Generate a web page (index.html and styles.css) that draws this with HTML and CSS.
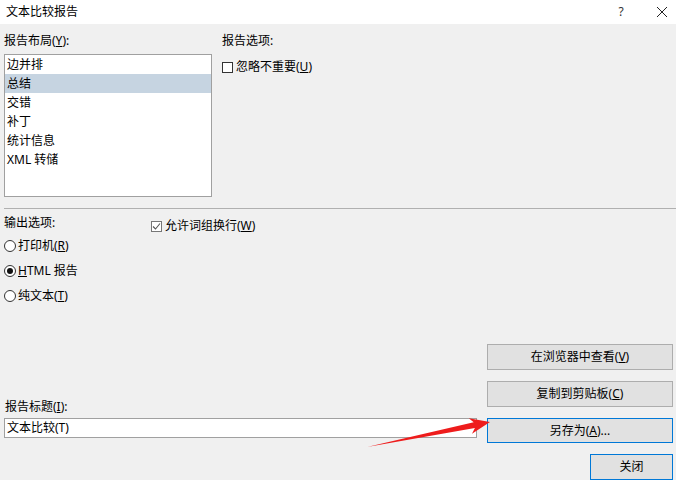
FILE: index.html
```html
<!DOCTYPE html>
<html lang="zh-CN">
<head>
<meta charset="utf-8">
<title>文本比较报告</title>
<link rel="stylesheet" href="styles.css">
</head>
<body>
<div class="dialog">
  <div class="titlebar">
    <span class="title">文本比较报告</span>
    <span class="help">?</span>
    <span class="close-x"><svg width="12" height="12" viewBox="0 0 12 12"><path d="M1 1 L11 11 M11 1 L1 11" stroke="#222" stroke-width="1" fill="none"/></svg></span>
  </div>

  <div class="top">
    <div class="layout-col">
      <div class="label">报告布局(<u>Y</u>):</div>
      <div class="listbox">
        <div class="item">边并排</div>
        <div class="item selected">总结</div>
        <div class="item">交错</div>
        <div class="item">补丁</div>
        <div class="item">统计信息</div>
        <div class="item">XML 转储</div>
      </div>
    </div>
    <div class="opts-col">
      <div class="label">报告选项:</div>
      <div class="check-row first">
        <span class="checkbox"></span>
        <span>忽略不重要(<u>U</u>)</span>
      </div>
    </div>
  </div>

  <div class="sep"></div>

  <div class="lower">
    <div class="out-row">
      <div class="out-col">
        <div class="label out-label">输出选项:</div>
        <div class="radio-row"><span class="radio"></span><span>打印机(<u>R</u>)</span></div>
        <div class="radio-row"><span class="radio on"></span><span><u>H</u>TML 报告</span></div>
        <div class="radio-row"><span class="radio"></span><span>纯文本(<u>T</u>)</span></div>
      </div>
      <div class="check-row wrap">
        <span class="checkbox checked"><svg width="9" height="9" viewBox="0 0 9 9"><path d="M1 4.5 L3.5 7 L8 1.5" stroke="#555" stroke-width="1.1" fill="none"/></svg></span>
        <span>允许词组换行(<u>W</u>)</span>
      </div>
    </div>

    <div class="actions">
      <div class="spacer"></div>
      <button class="btn">在浏览器中查看(<u>V</u>)</button>
      <div class="title-cell">
        <div class="label">报告标题(<u>I</u>):</div>
        <div class="input">文本比较(T)</div>
      </div>
      <button class="btn">复制到剪贴板(<u>C</u>)</button>
      <button class="btn default">另存为(<u>A</u>)...</button>
      <button class="btn default close-btn">关闭</button>
    </div>
  </div>

  <svg class="arrow" width="676" height="480" viewBox="0 0 676 480">
    <polygon points="367,447 473.7,422.3 468.8,418.2 490,422 472.0,433.8 474.9,428.1" fill="#ee1c1c"/>
  </svg>
</div>
</body>
</html>
```

FILE: styles.css
```css
* { box-sizing: border-box; }
html, body { margin: 0; padding: 0; }
body {
  width: 676px;
  height: 480px;
  overflow: hidden;
  background: #f0f0f0;
  font-family: "Noto Sans", "Noto Sans CJK SC", sans-serif;
  font-size: 12px;
  line-height: 16px;
  color: #000;
}
u { text-decoration: underline; text-underline-offset: 1px; }

.dialog { position: relative; width: 676px; height: 480px; }

.titlebar {
  height: 24px;
  background: #fff;
  display: flex;
  align-items: center;
  padding: 0 0 1px 6px;
}
.title { flex: 1; }
.help { width: 12px; text-align: center; color: #333; margin-right: 29px; }
.close-x { display: flex; margin-right: 8px; }

.top { display: flex; padding: 9px 0 0 4px; height: 184px; }
.layout-col { width: 208px; }
.label { height: 16px; white-space: nowrap; }
.listbox {
  margin-top: 5px;
  height: 143px;
  background: #fff;
  border: 1px solid #a0a0a0;
}
.item { height: 19px; line-height: 19px; padding-left: 2px; }
.item.selected { background: #c6d4e1; }

.opts-col { margin-left: 10px; }
.check-row { display: flex; align-items: center; height: 16px; white-space: nowrap; }
.check-row.first { margin-top: 10px; }
.checkbox {
  width: 11px;
  height: 11px;
  border: 1px solid #333;
  background: #fff;
  margin-right: 3px;
  display: flex;
  align-items: center;
  justify-content: center;
}
.checkbox.checked { border-color: #777; }

.sep { height: 1px; background: #b0b0b0; margin-left: 4px; }

.lower { padding-left: 4px; padding-right: 3px; }
.out-row { display: flex; }
.out-col { width: 147px; }
.out-label { margin-top: 6px; margin-bottom: 2px; }
.radio-row { display: flex; align-items: center; height: 25px; white-space: nowrap; }
.radio {
  width: 12px;
  height: 12px;
  border: 1px solid #333;
  border-radius: 50%;
  background: #fff;
  margin-right: 2px;
  display: flex;
  align-items: center;
  justify-content: center;
}
.radio.on::after {
  content: "";
  width: 6px;
  height: 6px;
  border-radius: 50%;
  background: #111;
}
.check-row.wrap { margin-top: 9px; }

.actions {
  margin-top: 36px;
  display: grid;
  grid-template-columns: 473px 186px;
  grid-template-rows: 26px 26px 25px 26px;
  column-gap: 10px;
  row-gap: 11px;
}
.btn {
  font: inherit;
  color: #000;
  background: #e1e1e1;
  border: 1px solid #adadad;
  padding: 0;
  margin: 0;
  line-height: 16px;
}
.btn.default { border-color: #0078d7; }
.title-cell {
  grid-column: 1;
  grid-row: 2 / 4;
  display: flex;
  flex-direction: column;
  justify-content: flex-end;
  padding-bottom: 5px;
}
.title-cell .label { margin-bottom: 3px; padding-left: 1px; }
.input {
  height: 20px;
  background: #fff;
  border: 1px solid #a0a0a0;
  padding-left: 2px;
  line-height: 18px;
}
.close-btn { grid-column: 2; grid-row: 4; justify-self: end; width: 83px; }
.spacer { grid-column: 1; grid-row: 1; }

.arrow { position: absolute; left: 0; top: 0; pointer-events: none; }
```
